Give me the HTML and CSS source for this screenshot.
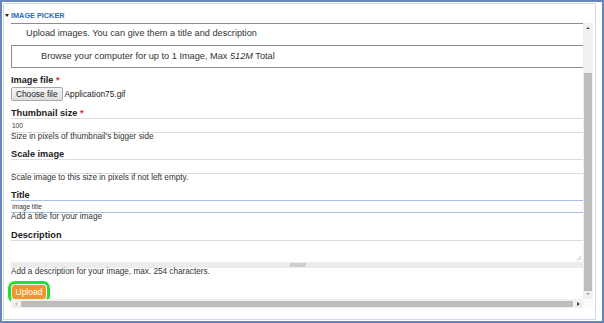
FILE: index.html
```html
<!DOCTYPE html>
<html lang="en">
<head>
<meta charset="utf-8">
<title>Image Picker</title>
<link rel="stylesheet" href="styles.css">
</head>
<body>
<div class="frame">
  <div class="panel">
    <div class="legend"><span class="caret"></span><span class="legend-text">IMAGE PICKER</span></div>
    <div class="scroller">
      <div class="content">
        <div class="intro">Upload images. You can give them a title and description</div>
        <div class="browse">Browse your computer for up to 1 Image, Max <em>512M</em> Total</div>

        <div class="label label-first">Image file <span class="req">*</span></div>
        <div class="file-row"><span class="file-btn">Choose file</span><span class="file-name">Application75.gif</span></div>

        <div class="label">Thumbnail size <span class="req">*</span></div>
        <div class="input">100</div>
        <div class="help">Size in pixels of thumbnail's bigger side</div>

        <div class="label">Scale image</div>
        <div class="input"></div>
        <div class="help">Scale image to this size in pixels if not left empty.</div>

        <div class="label">Title</div>
        <div class="input input-focus">Image title</div>
        <div class="help">Add a title for your image</div>

        <div class="label label-desc">Description</div>
        <div class="textarea">
          <div class="ta-body">
            <svg class="grip" width="6" height="6" viewBox="0 0 6 6"><path d="M5.5 0.5 L0.5 5.5 M5.5 3 L3 5.5" stroke="#b0b0b0" stroke-width="0.8" fill="none"/></svg>
          </div>
          <div class="ta-hbar"><span class="ta-thumb"></span></div>
        </div>
        <div class="help">Add a description for your image, max. 254 characters.</div>

        <div class="actions"><span class="upload">Upload</span></div>
      </div>
      <div class="vbar">
        <span class="arrow-up"></span>
        <span class="vbar-gap"></span>
        <span class="vthumb"></span>
        <span class="arrow-down"></span>
      </div>
      <div class="hbar">
        <span class="arrow-left"></span>
        <span class="hthumb"></span>
        <span class="arrow-right"></span>
      </div>
      <div class="corner"></div>
    </div>
  </div>
</div>
</body>
</html>
```

FILE: styles.css
```css
html, body {
  margin: 0;
  padding: 0;
  background: #fff;
}

body {
  width: 604px;
  height: 323px;
  overflow: hidden;
  font-family: "Liberation Sans", Arial, sans-serif;
  color: #333;
}

.frame {
  box-sizing: border-box;
  width: 604px;
  height: 323px;
  border: 2px solid #6587bd;
  padding: 1px 6px 1px 1px;
  display: flex;
}

.panel {
  flex: 1;
  border: 1px solid #cfd9e7;
  display: flex;
  flex-direction: column;
}

.legend {
  height: 19px;
  box-sizing: border-box;
  padding-top: 4px;
  display: flex;
  align-items: center;
  align-self: flex-start;
  line-height: 9px;
  flex-shrink: 0;
}

.caret {
  width: 0;
  height: 0;
  margin-left: 1px;
  margin-right: 2px;
  border-left: 2px solid transparent;
  border-right: 2px solid transparent;
  border-top: 3px solid #222;
}

.legend-text {
  font-size: 7.3px;
  font-weight: bold;
  color: #2a6db4;
  height: 9px;
}

.scroller {
  margin-left: 7px;
  display: grid;
  grid-template-columns: 572px 10px;
  grid-template-rows: 276px 9px;
  flex-shrink: 0;
}

.content {
  min-width: 0;
  display: flex;
  flex-direction: column;
  align-items: flex-start;
}

.content > * {
  flex-shrink: 0;
}

.intro {
  align-self: stretch;
  border-top: 1px solid #8c8c8c;
  height: 21px;
  line-height: 18px;
  padding-left: 15px;
  font-size: 9.2px;
  color: #333;
}

.browse {
  align-self: stretch;
  border-top: 1px solid #8c8c8c;
  border-bottom: 1px solid #8c8c8c;
  border-left: 1px solid #8c8c8c;
  height: 21px;
  line-height: 21px;
  padding-left: 29px;
  font-size: 9.2px;
  color: #333;
}

.label {
  margin-top: 7px;
  font-size: 9.2px;
  font-weight: bold;
  line-height: 10px;
  color: #222;
}

.label-first {
  line-height: 11px;
}

.req {
  color: #e2261d;
  font-weight: bold;
}

.file-row {
  margin-top: 1px;
  display: flex;
  align-items: center;
  height: 14px;
}

.file-btn {
  box-sizing: border-box;
  height: 14px;
  line-height: 12px;
  padding: 0 4px;
  border: 1px solid #a9a9a9;
  border-radius: 2px;
  background: linear-gradient(#f6f6f6, #dedede);
  font-size: 8.3px;
  color: #222;
}

.file-name {
  margin-left: 2px;
  font-size: 8.3px;
  color: #222;
}

.input {
  align-self: stretch;
  box-sizing: border-box;
  height: 15px;
  border-top: 1px solid #dedede;
  border-bottom: 1px solid #dedede;
  padding-left: 1px;
  font-size: 6.5px;
  line-height: 13px;
  color: #333;
}

.input-focus {
  height: 13px;
  line-height: 11px;
  border-color: #a7c1e4;
}

.help {
  font-size: 8.2px;
  line-height: 8px;
  color: #333;
}

.help + .label {
  margin-top: 8px;
}

.help + .label-desc {
  margin-top: 9px;
}

.textarea {
  align-self: stretch;
  height: 28px;
  border-top: 1px solid #dcdcdc;
  box-sizing: border-box;
  display: flex;
  flex-direction: column;
}

.ta-body {
  flex: 1;
  display: flex;
  justify-content: flex-end;
  align-items: flex-end;
  padding: 0 0 1px 0;
}

.grip {
  display: block;
  margin-right: 1px;
}

.ta-hbar {
  height: 6px;
  background: #ececec;
  display: flex;
  align-items: center;
}

.ta-thumb {
  width: 16px;
  height: 4px;
  margin-left: 279px;
  background: #cfcfcf;
}

.actions {
  margin-top: 9px;
  padding-left: 1px;
  display: flex;
  height: 14px;
}

.upload {
  display: block;
  box-sizing: border-box;
  height: 14px;
  line-height: 14px;
  padding: 0 3.5px;
  border-radius: 3px;
  background: #f0962f;
  color: #fff;
  font-size: 8.5px;
  outline: 3px solid #26e02a;
  outline-offset: 1px;
}

.vbar {
  background: #f0f0f0;
  display: flex;
  flex-direction: column;
  align-items: center;
}

.vbar > * {
  flex-shrink: 0;
}

.arrow-up {
  margin-top: 4px;
  width: 0;
  height: 0;
  border-left: 2px solid transparent;
  border-right: 2px solid transparent;
  border-bottom: 2px solid #505050;
}

.vbar-gap {
  height: 44px;
}

.vthumb {
  width: 8px;
  height: 218px;
  background: #bdbdbd;
}

.arrow-down {
  margin-top: 2px;
  width: 0;
  height: 0;
  border-left: 2px solid transparent;
  border-right: 2px solid transparent;
  border-top: 2px solid #a4a4a4;
}

.hbar {
  background: #f0f0f0;
  display: flex;
  align-items: center;
}

.arrow-left {
  width: 10px;
  display: flex;
  justify-content: center;
}

.arrow-left::before {
  content: "";
  width: 0;
  height: 0;
  border-top: 2px solid transparent;
  border-bottom: 2px solid transparent;
  border-right: 2px solid #b5b5b5;
}

.hthumb {
  width: 552px;
  height: 6px;
  background: #bdbdbd;
}

.arrow-right {
  width: 10px;
  display: flex;
  justify-content: center;
}

.arrow-right::before {
  content: "";
  width: 0;
  height: 0;
  border-top: 2px solid transparent;
  border-bottom: 2px solid transparent;
  border-left: 3px solid #404040;
}

.corner {
  background: #fafafa;
}
```
